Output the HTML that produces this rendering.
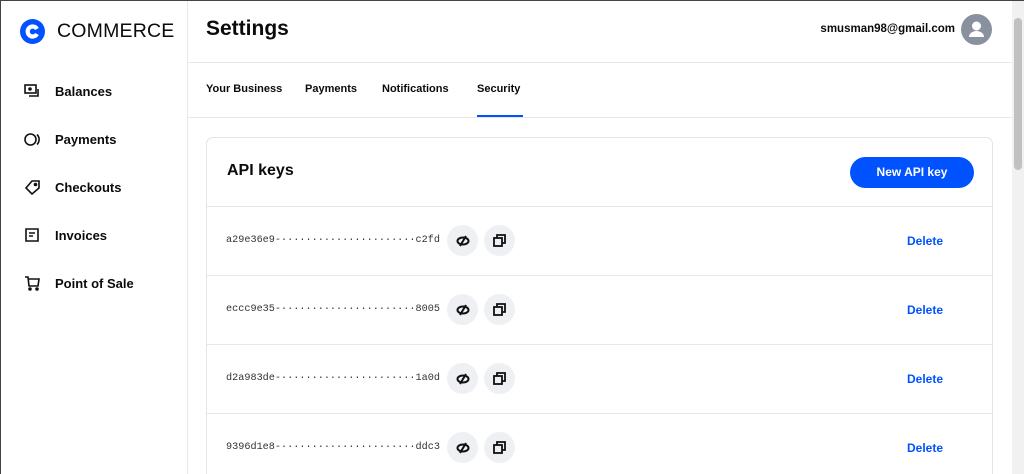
<!DOCTYPE html>
<html style="overflow:hidden"><head><style>
*{box-sizing:border-box;margin:0;padding:0}
html,body{width:1024px;height:474px;overflow:hidden}
body{background:#fff;font-family:"Liberation Sans",sans-serif;color:#0a0b0d;position:relative}
.frame{position:absolute;left:0;top:0;width:1024px;height:474px;border-top:1px solid #444;border-left:1px solid #444;pointer-events:none;z-index:5}
.side{position:absolute;left:0;top:0;width:188px;height:474px;border-right:1px solid #e6e8eb}
.logo{position:absolute;left:20px;top:19px;display:flex;align-items:center}
.logo span{font-size:19.5px;margin-left:12px;letter-spacing:0.2px}
.nav{position:absolute;left:24px;font-size:13px;font-weight:bold;display:flex;align-items:center}
.nav svg{margin-right:14px}
.hdr{position:absolute;left:188px;top:0;width:824px;height:63px;border-bottom:1px solid #e6e8eb}
.hdr h1{position:absolute;left:18px;top:17px;font-size:21px}
.email{position:absolute;right:57px;top:23px;font-size:11.5px;font-weight:bold}
.av{position:absolute;right:20px;top:14px;width:31px;height:31px;border-radius:50%;background:#8a919e}
.tabs{position:absolute;left:188px;top:63px;width:824px;height:55px;border-bottom:1px solid #e6e8eb;font-size:11px;font-weight:bold}
.tabs span{position:absolute;top:20px}
.card{position:absolute;left:206px;top:137px;width:787px;height:360px;border:1px solid #e2e4e8;border-radius:7px}
.card h2{position:absolute;left:20px;top:24px;font-size:16px}
.btn{position:absolute;left:643px;top:19px;width:124px;height:31px;border-radius:16px;background:#0052ff;color:#fff;font-size:12px;font-weight:bold;text-align:center;line-height:31px}
.row{position:absolute;left:0;width:785px;height:69px;border-top:1px solid #e6e8eb}
.key{position:absolute;left:19px;top:28px;font-family:"Liberation Mono",monospace;font-size:10.2px;color:#333}
.ib{position:absolute;top:18px;width:31px;height:31px;border-radius:50%;background:#eef0f3;display:flex;align-items:center;justify-content:center}
.del{position:absolute;left:700px;top:27px;color:#0052ff;font-weight:bold;font-size:12px}
.sb{position:absolute;right:0;top:0;width:12px;height:474px;background:#f1f1f1}
.th{position:absolute;right:2px;top:18px;width:8px;height:152px;background:#c1c1c1;border-radius:4px}
</style></head><body>
<div class="frame"></div>
<div class="side">
<div class="logo"><svg width="25" height="25" viewBox="0 0 25 25"><circle cx="12.5" cy="12.5" r="12.5" fill="#0052ff"/><path d="M17 10A5 5 0 1 0 17 15" stroke="#fff" stroke-width="4.2" fill="none"/></svg><span>COMMERCE</span></div>
<div class="nav" style="top:84px"><svg width="17" height="15" viewBox="0 0 17 15" fill="none" stroke="#111" stroke-width="1.6"><rect x="1" y="1" width="11" height="8"/><circle cx="6" cy="5" r="1" fill="#111"/><path d="M14 5v7H5"/></svg>Balances</div>
<div class="nav" style="top:132px"><svg width="17" height="15" viewBox="0 0 17 15" fill="none" stroke="#111" stroke-width="1.6"><circle cx="6.5" cy="7.5" r="5.5"/><path d="M13 2.5a7 7 0 0 1 0 10"/></svg>Payments</div>
<div class="nav" style="top:180px"><svg width="17" height="15" viewBox="0 0 17 15" fill="none" stroke="#111" stroke-width="1.6"><path d="M8 1h7v7l-7 6-6-6z"/><circle cx="11.5" cy="4.5" r="1" fill="#111"/></svg>Checkouts</div>
<div class="nav" style="top:228px"><svg width="17" height="15" viewBox="0 0 17 15" fill="none" stroke="#111" stroke-width="1.6"><path d="M2 1h12v12H2z"/><path d="M5 5h6M5 8h4"/></svg>Invoices</div>
<div class="nav" style="top:276px"><svg width="17" height="15" viewBox="0 0 17 15" fill="none" stroke="#111" stroke-width="1.6"><path d="M1 1h3l1 9h9l1-7H5"/><circle cx="6" cy="13" r="1" fill="#111"/><circle cx="13" cy="13" r="1" fill="#111"/></svg>Point of Sale</div>
</div>
<div class="hdr"><h1>Settings</h1><div class="email">smusman98@gmail.com</div><div class="av"><svg width="31" height="31" viewBox="0 0 31 31"><circle cx="15.5" cy="12" r="4.5" fill="#fff"/><path d="M8 23a7.5 6 0 0 1 15 0z" fill="#fff"/></svg></div></div>
<div class="tabs"><span style="left:18px">Your Business</span><span style="left:117px">Payments</span><span style="left:194px">Notifications</span><span style="left:289px">Security</span><div style="position:absolute;left:289px;top:52px;width:46px;height:2px;background:#0052ff"></div></div>
<div class="card"><h2>API keys</h2><div class="btn">New API key</div>
<div class="row" style="top:68px"><div class="key">a29e36e9-······················c2fd</div><div class="ib" style="left:240px"><svg width="14" height="12" viewBox="0 0 14 12" fill="none" stroke="#111" stroke-width="2"><ellipse cx="7" cy="6" rx="5.5" ry="3.5"/><path d="M10 1L4 11"/></svg></div><div class="ib" style="left:277px"><svg width="13" height="13" viewBox="0 0 13 13" fill="none" stroke="#111" stroke-width="1.8"><rect x="1" y="4" width="8" height="8"/><path d="M4 4V1h8v8H9"/></svg></div><div class="del">Delete</div></div>
<div class="row" style="top:137px"><div class="key">eccc9e35-······················8005</div><div class="ib" style="left:240px"><svg width="14" height="12" viewBox="0 0 14 12" fill="none" stroke="#111" stroke-width="2"><ellipse cx="7" cy="6" rx="5.5" ry="3.5"/><path d="M10 1L4 11"/></svg></div><div class="ib" style="left:277px"><svg width="13" height="13" viewBox="0 0 13 13" fill="none" stroke="#111" stroke-width="1.8"><rect x="1" y="4" width="8" height="8"/><path d="M4 4V1h8v8H9"/></svg></div><div class="del">Delete</div></div>
<div class="row" style="top:206px"><div class="key">d2a983de-······················1a0d</div><div class="ib" style="left:240px"><svg width="14" height="12" viewBox="0 0 14 12" fill="none" stroke="#111" stroke-width="2"><ellipse cx="7" cy="6" rx="5.5" ry="3.5"/><path d="M10 1L4 11"/></svg></div><div class="ib" style="left:277px"><svg width="13" height="13" viewBox="0 0 13 13" fill="none" stroke="#111" stroke-width="1.8"><rect x="1" y="4" width="8" height="8"/><path d="M4 4V1h8v8H9"/></svg></div><div class="del">Delete</div></div>
<div class="row" style="top:275px"><div class="key">9396d1e8-······················ddc3</div><div class="ib" style="left:240px"><svg width="14" height="12" viewBox="0 0 14 12" fill="none" stroke="#111" stroke-width="2"><ellipse cx="7" cy="6" rx="5.5" ry="3.5"/><path d="M10 1L4 11"/></svg></div><div class="ib" style="left:277px"><svg width="13" height="13" viewBox="0 0 13 13" fill="none" stroke="#111" stroke-width="1.8"><rect x="1" y="4" width="8" height="8"/><path d="M4 4V1h8v8H9"/></svg></div><div class="del">Delete</div></div>
</div>
<div class="sb"><div class="th"></div></div>
</body></html>
